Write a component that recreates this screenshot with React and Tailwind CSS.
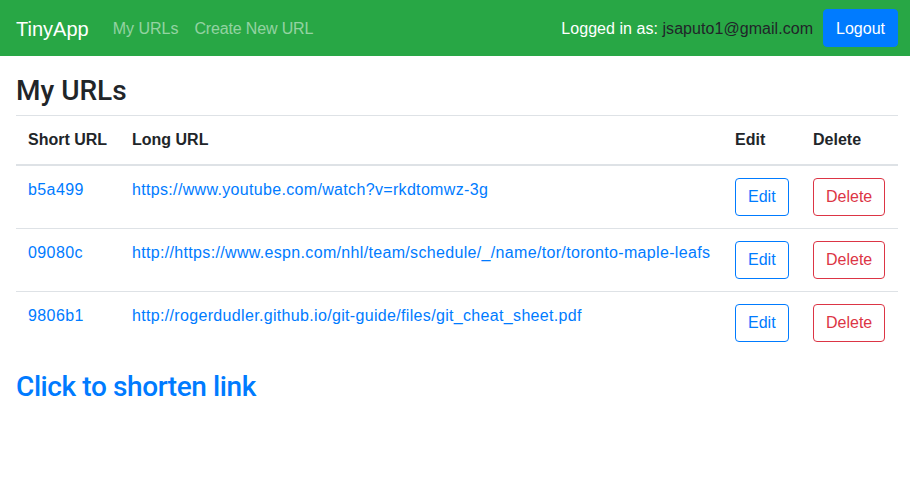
export default function App() {
  const rows = [
    ["b5a499", "https://www.youtube.com/watch?v=rkdtomwz-3g"],
    ["09080c", "http://https://www.espn.com/nhl/team/schedule/_/name/tor/toronto-maple-leafs"],
    ["9806b1", "http://rogerdudler.github.io/git-guide/files/git_cheat_sheet.pdf"],
  ];
  return (
    <div className="font-['Liberation_Sans',Arial,sans-serif] text-[16px] leading-[1.5] text-[#212529] bg-white min-h-[482px]">
      <nav className="h-[56px] bg-[#28a745] flex items-center pl-4 pr-3">
        <a className="text-white text-[20px] leading-[30px] pt-[6px] pb-[4px] mr-4">TinyApp</a>
        <a className="text-white/50 px-2 pt-[1px]">My URLs</a>
        <a className="text-white/50 px-2 pt-[1px] tracking-[-0.15px]">Create New URL</a>
        <div className="ml-auto flex items-center">
          <span className="text-white mr-[10px] pt-[1px] tracking-[0.05px]">
            Logged in as: <span className="text-[#212529]">jsaputo1@gmail.com</span>
          </span>
          <button className="bg-[#007bff] text-white rounded-[4px] px-3 pt-[7px] pb-[5px] leading-6 border border-[#007bff]">Logout</button>
        </div>
      </nav>
      <div className="pl-4 pr-3 pt-[18px]">
        <h3 className="font-['Roboto',sans-serif] font-medium text-[28px] leading-[1.2] mb-[7px]">My URLs</h3>
        <table className="w-full border-collapse table-fixed mb-4">
          <thead>
            <tr>
              <th className="text-left font-bold p-3 border-t border-b-2 border-[#dee2e6] align-bottom w-[104px]">Short URL</th>
              <th className="text-left font-bold p-3 border-t border-b-2 border-[#dee2e6] align-bottom">Long URL</th>
              <th className="text-left font-bold p-3 border-t border-b-2 border-[#dee2e6] align-bottom w-[78px]">Edit</th>
              <th className="text-left font-bold p-3 border-t border-b-2 border-[#dee2e6] align-bottom w-[97px]">Delete</th>
            </tr>
          </thead>
          <tbody>
            {rows.map(([s, l]) => (
              <tr key={s}>
                <td className="p-3 border-t border-[#dee2e6] align-top">
                  <a className="text-[#007bff] tracking-[0.4px]">{s}</a>
                </td>
                <td className="p-3 border-t border-[#dee2e6] align-top whitespace-nowrap">
                  <a className="text-[#007bff] tracking-[0.33px]">{l}</a>
                </td>
                <td className="p-3 border-t border-[#dee2e6] align-top">
                  <button className="border border-[#007bff] text-[#007bff] rounded-[4px] px-3 py-[6px] leading-6">Edit</button>
                </td>
                <td className="p-3 border-t border-[#dee2e6] align-top">
                  <button className="border border-[#dc3545] text-[#dc3545] rounded-[4px] px-3 py-[6px] leading-6">Delete</button>
                </td>
              </tr>
            ))}
          </tbody>
        </table>
        <h3 className="font-['Roboto',sans-serif] font-medium text-[28px] leading-[1.2] tracking-[-0.4px]">
          <a className="text-[#007bff]">Click to shorten link</a>
        </h3>
      </div>
    </div>
  );
}
